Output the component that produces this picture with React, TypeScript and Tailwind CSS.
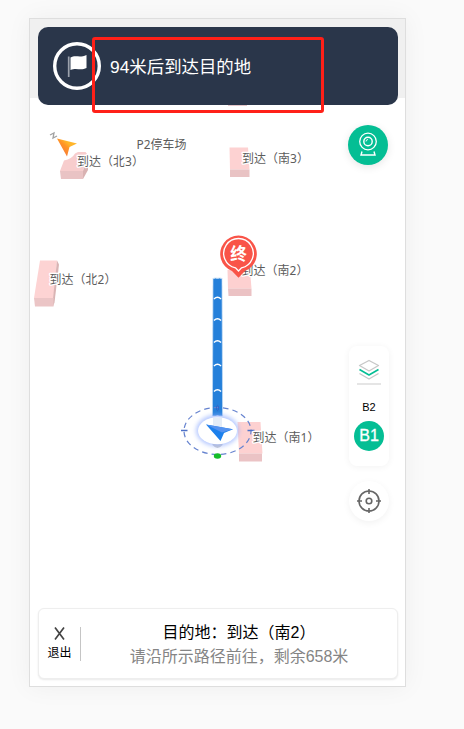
import React from "react";

type Label = { text: string; x: number; y: number; width: number };

const LABELS: Label[] = [
  { text: "P2停车场", x: 136.5, y: 149, width: 50 },
  { text: "到达（北3）", x: 77, y: 166, width: 67 },
  { text: "到达（南3）", x: 242, y: 163, width: 67 },
  { text: "到达（北2）", x: 49.5, y: 283.5, width: 67 },
  { text: "到达（南2）", x: 241.5, y: 274.5, width: 67 },
  { text: "到达（南1）", x: 252.5, y: 442, width: 67 },
];

const CHEVRONS = [297, 318.5, 340.5, 364, 389.5, 416];

function ParkingMap() {
  return (
    <svg className="absolute inset-0 h-full w-full" viewBox="30 19 375 667">
      <defs>
        <linearGradient id="compass" x1="0" y1="1" x2="1" y2="0">
          <stop offset="0.2" stopColor="#f77b38" />
          <stop offset="0.5" stopColor="#ff9328" />
          <stop offset="0.65" stopColor="#ffb52b" />
        </linearGradient>
        <filter id="glow" x="-40%" y="-40%" width="180%" height="180%">
          <feGaussianBlur stdDeviation="2.2" />
        </filter>
      </defs>

      {/* Buildings */}
      <path d="M228 105h19v0.8h-19z" fill="#dfb9bd" />
      <path d="M64 160.500q8-1.500 11-7l3-1.500h7.500l2.500 3-5 16H60z" fill="#f7cdcd" />
      <path d="M83 171l5-15v14l-5 9z" fill="#d9b2b2" />
      <path d="M60 171h23v8H61z" fill="#e9c3c4" />
      <path d="M229.500 147.500h18.500l1.500 22h-19.500z" fill="#fdd2d2" />
      <path d="M230 169.500h19.500v7.500H230z" fill="#e9c3c4" />
      <path d="M40 260.500h17l-3.500 37.500H34z" fill="#fdd3d3" />
      <path d="M57 260.500l2 4-4.500 38-1.500 4v-8z" fill="#d9b4b4" />
      <path d="M34 298h19.500v8.500H35z" fill="#ebc5c6" />
      <path d="M227.500 270H250l1.500 18.500H228z" fill="#fdd0d0" />
      <path d="M228 288.500h23.500v7.500H228.500z" fill="#ebc2c4" />
      <path d="M237.500 422H260.500l2 31.500H239z" fill="#fdd1d1" />
      <path d="M239 453.500h23v8H239z" fill="#ebc3c5" />

      {/* Route */}
      <path d="M213 278h9l.6 138h-10.200z" fill="#2580da" stroke="#c5ddf4" strokeWidth="0.7" />
      <path d="M213 277l2.500 1.500 2-1 2 1 2.500-1.500v1.500h-9z" fill="#fff" />
      <path d="M212.500 440h10v5q-5 6-10 0z" fill="#c9c9cc" />
      <g fill="none" stroke="#fff" strokeWidth="1.5">
        {CHEVRONS.map((y) => (
          <path key={y} d={`M214 ${y + 2}q3.500-3.500 7 0`} />
        ))}
      </g>

      {/* Current position */}
      <ellipse cx="217.500" cy="430.500" rx="21.500" ry="16" fill="#91adff" opacity="0.65" filter="url(#glow)" />
      <ellipse cx="217.500" cy="430.800" rx="19.500" ry="13.500" fill="#fff" />
      <path d="M213 417.500h9v13h-9z" fill="#d9e4f4" opacity="0.7" />
      <ellipse cx="217.500" cy="431" rx="33.500" ry="23.500" fill="none" stroke="#6683cf" strokeWidth="1.2" strokeDasharray="5.500 4" strokeDashoffset="2" />
      <path d="M181 430.500h6.500M247.500 430.500h7" stroke="#4d70c7" strokeWidth="1.3" />
      <ellipse cx="217.500" cy="408" rx="1.100" ry="2.600" fill="none" stroke="#385dc2" strokeWidth="0.8" />
      <path d="M206 424.500L233 429.300L224 433L220.500 441z" fill="#1c80ec" />
      <path d="M206 424.500L233 429.300L222 432.500z" fill="#5592f0" />
      <ellipse cx="217.500" cy="456" rx="3.700" ry="2.800" fill="#15bd29" />

      <g fontFamily='"Noto Sans", "Noto Sans CJK SC", sans-serif' fontSize="12" fill="#5c5c5c" stroke="#fff" strokeWidth="2.5" strokeLinejoin="round" paintOrder="stroke">
        {LABELS.map((label) => (
          <text key={label.text} x={label.x} y={label.y} textLength={label.width}>
            {label.text}
          </text>
        ))}
      </g>

      {/* Compass */}
      <path d="M57 138.500L77 143.500L69.500 147L67 156.500z" fill="url(#compass)" />
      <path d="M50 135l4-2-1 5 4-2" fill="none" stroke="#a2a2a2" strokeWidth="1.300" />

      {/* Destination pin */}
      <path d="M238.500 277.800L232 271A18.300 18.300 0 1 1 245 271z" fill="#f95448" />
      <path d="M235.500 267.800A14.800 14.800 0 1 1 241.500 267.800L238.500 271z" fill="none" stroke="#fff" strokeWidth="1.300" />
      <text x="238.500" y="259.500" textAnchor="middle" fontSize="16.500" fontWeight="700" fill="#fff" fontFamily='"Noto Sans CJK SC", sans-serif'>
        终
      </text>
    </svg>
  );
}

function Header() {
  return (
    <header className="flex h-[78px] shrink-0 items-center rounded-[10px] bg-[#2a364a] pl-[15px]">
      <svg className="h-12 w-12 shrink-0" viewBox="0 0 48 48">
        <circle cx="24" cy="24" r="22.300" fill="none" stroke="#fff" strokeWidth="3.400" />
        <path d="M15.700 14.500v20.500" stroke="#9ca2ac" strokeWidth="1.700" />
        <path d="M17.500 15.500c5-3 9 .8 16-2.500v13c-6 3-10-.8-16 2z" fill="#fff" />
      </svg>
      <h1 className="mt-0.5 ml-[9px] text-[17.400px] leading-6 whitespace-nowrap text-white">94米后到达目的地</h1>
    </header>
  );
}

function MapControls() {
  return (
    <div className="mr-[9px] flex w-10 flex-col self-end pt-5">
      <button className="-ml-px flex h-10 w-10 items-center justify-center rounded-full bg-[#04be94] shadow-[0_2px_8px_rgba(0,0,0,0.1)]">
        <svg width="40" height="40" viewBox="0 0 40 40" fill="none" stroke="#fff">
          <circle cx="20" cy="16.500" r="8.300" strokeWidth="1.300" />
          <circle cx="20" cy="16.500" r="4.200" strokeWidth="1.400" />
          <path d="M18 16.500q0-2 2-2" strokeWidth="0.900" />
          <path d="M14 26.500l-1 3.500h14l-1-3.500" strokeWidth="1.400" />
        </svg>
      </button>
      <div className="mt-[181px] flex h-[120px] flex-col items-center rounded-lg bg-white shadow-[0_1px_7px_rgba(0,0,0,0.055)]">
        <svg className="mt-[13px] h-[23px] w-6 shrink-0" viewBox="0 0 24 23" fill="none" strokeWidth="1.300" strokeLinejoin="round">
          <path d="M12 1.500l9.500 5-9.500 5.500-9.500-5.500z" stroke="#c7c7c7" />
          <path d="M2.500 14.500l9.500 5.500 9.500-5.500" stroke="#c7c7c7" />
          <path d="M2.500 10.500l9.500 5.500 9.500-5.500" stroke="#04be94" strokeWidth="1.600" />
        </svg>
        <div className="mt-px h-0.5 w-6 shrink-0 bg-[#e5e5e5]" />
        <span className="mt-[14px] text-[11px] leading-4 text-black">B2</span>
        <span className="mt-[6px] flex h-[30px] w-[30px] shrink-0 items-center justify-center rounded-full bg-[#04be94] text-base text-white [-webkit-text-stroke:0.3px_white]">B1</span>
      </div>
      <button className="mt-[15px] flex h-10 w-10 items-center justify-center rounded-full bg-white shadow-[0_2px_7px_rgba(0,0,0,0.055)]">
        <svg width="24" height="24" viewBox="0 0 24 24" fill="none" stroke="#666" strokeWidth="1.600">
          <circle cx="12" cy="12" r="10" />
          <circle cx="12" cy="12" r="2.800" />
          <path d="M12 0v5M12 19v5M0 12h5M19 12h5" />
        </svg>
      </button>
    </div>
  );
}

function Footer() {
  return (
    <footer className="mt-auto flex h-[71px] shrink-0 items-center rounded-md border border-[#eee] bg-white shadow-[0_1px_2px_rgba(0,0,0,0.09)]">
      <button className="flex h-[34px] w-[42px] shrink-0 flex-col items-center justify-center border-r border-[#c5c5c5] text-black">
        <svg className="h-[13px] w-[11px] shrink-0" viewBox="0 0 11 13" fill="none" stroke="#444" strokeWidth="1.700">
          <path d="M1 .5l9 12M10 .5l-9 12" />
        </svg>
        <span className="mt-[5px] text-xs leading-4">退出</span>
      </button>
      <div className="mt-[3px] flex-1 text-center text-base leading-6 whitespace-nowrap">
        <p className="text-black">目的地：到达（南2）</p>
        <p className="text-[#858585]">请沿所示路径前往，剩余658米</p>
      </div>
    </footer>
  );
}

export default function App() {
  return (
    <div className="relative h-[729px] w-[464px] overflow-hidden bg-[#fafafa] pt-[18px] pl-[29px] font-['Liberation_Sans','Noto_Sans_CJK_SC',sans-serif]">
      <main className="relative h-[669px] w-[377px] border border-[#dedede] bg-white shadow-[0_0_24px_rgba(0,0,0,0.05)]">
        <div className="h-[79px] bg-[#f0f0f0]" />
        <ParkingMap />
        <div className="absolute inset-0 flex flex-col pt-2 pr-[7px] pb-[7px] pl-2">
          <Header />
          <MapControls />
          <Footer />
        </div>
      </main>
      {/* Highlight around the guidance message */}
      <div className="absolute top-[37px] left-[92px] h-[76px] w-[232px] rounded-[3px] border-3 border-[#ff2018]" />
    </div>
  );
}
